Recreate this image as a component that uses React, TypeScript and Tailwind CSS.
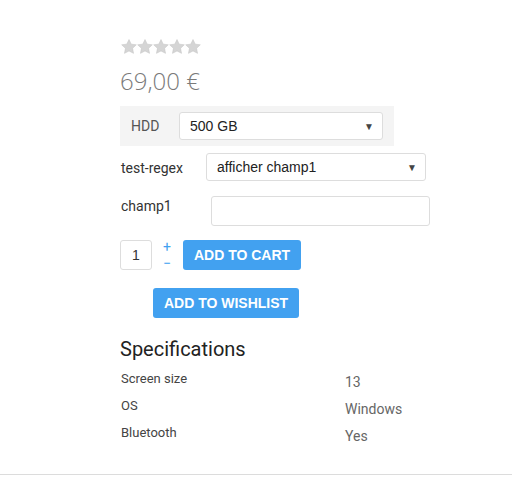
import React from "react";

const Star = () => (
  <svg width="16" height="15" viewBox="0 0 24 23" className="block">
    <path d="M12 0.8l3.4 7.1 7.8 1-5.7 5.4 1.4 7.7L12 18.3 5.1 22l1.4-7.7L0.8 8.9l7.8-1z" fill="#d5d5d5" stroke="#c4c4c4" strokeWidth="0.8" />
  </svg>
);

export default function App() {
  return (
    <div className="w-[517px] h-[477px] bg-white relative" style={{ fontFamily: "Roboto, 'Liberation Sans', sans-serif" }}>
      <div className="pl-[120px] pt-[39px]">
        <div className="flex gap-0 pl-[1px]">
          <Star /><Star /><Star /><Star /><Star />
        </div>
        <div className="mt-[12px] text-[24px] leading-[30px] text-[#7a7a7a] font-light" style={{ fontFamily: "'Open Sans', sans-serif" }}>69,00 €</div>
        <div className="mt-[10px] w-[274px] h-[40px] bg-[#f4f4f4] flex items-center pl-[11px]">
          <span className="text-[14px] text-[#555] w-[48px]">HDD</span>
          <div className="w-[204px] h-[28px] bg-white border border-[#ddd] rounded-[3px] flex items-center justify-between pl-[10px] pr-[8px]">
            <span className="text-[14px] text-[#222]" style={{ fontFamily: "'Liberation Sans', sans-serif" }}>500 GB</span>
            <span className="text-[10px] text-[#444]">▼</span>
          </div>
        </div>
        <div className="mt-[7px] flex items-center h-[28px]">
          <span className="text-[14px] text-[#333] w-[86px] pl-[1px] pt-[3px]">test-regex</span>
          <div className="w-[220px] h-[28px] bg-white border border-[#ddd] rounded-[3px] flex items-center justify-between pl-[10px] pr-[8px]">
            <span className="text-[14px] text-[#222]" style={{ fontFamily: "'Liberation Sans', sans-serif" }}>afficher champ1</span>
            <span className="text-[10px] text-[#444]">▼</span>
          </div>
        </div>
        <div className="mt-[15px] flex items-start h-[30px]">
          <span className="text-[14px] text-[#333] w-[91px] pl-[1px] pt-[1px] leading-[18px]">champ1</span>
          <div className="w-[219px] h-[30px] bg-white border border-[#ddd] rounded-[3px]"></div>
        </div>
        <div className="mt-[14px] flex items-center">
          <div className="w-[32px] h-[30px] border border-[#ddd] rounded-[3px] flex items-center justify-center text-[14px] text-[#333]" style={{ fontFamily: "'Liberation Sans', sans-serif" }}>1</div>
          <div className="ml-[9px] w-[12px] h-[30px] flex flex-col items-center justify-between text-[#42a1f0] text-[14px] leading-[14px]">
            <span>+</span>
            <span>−</span>
          </div>
          <button className="ml-[10px] w-[118px] h-[30px] bg-[#42a1f0] rounded-[3px] text-white text-[14px] font-bold" style={{ fontFamily: "'Liberation Sans', sans-serif" }}>ADD TO CART</button>
        </div>
        <div className="mt-[18px] pl-[33px]">
          <button className="w-[146px] h-[30px] bg-[#42a1f0] rounded-[3px] text-white text-[14px] font-bold" style={{ fontFamily: "'Liberation Sans', sans-serif" }}>ADD TO WISHLIST</button>
        </div>
        <div className="mt-[19px] text-[20px] leading-[24px] text-[#222]">Specifications</div>
        <div className="mt-[8px] text-[13px] text-[#444]">
          <div className="flex h-[27px]"><span className="w-[225px] pl-[1px]">Screen size</span><span className="pt-[3px] text-[14px] text-[#666]">13</span></div>
          <div className="flex h-[27px]"><span className="w-[225px] pl-[1px]">OS</span><span className="pt-[3px] text-[14px] text-[#666]">Windows</span></div>
          <div className="flex h-[27px]"><span className="w-[225px] pl-[1px]">Bluetooth</span><span className="pt-[3px] text-[14px] text-[#666]">Yes</span></div>
        </div>
      </div>
      <div className="absolute left-0 top-[474px] w-[512px] h-[1px] bg-[#dcdcdc]"></div>
    </div>
  );
}
